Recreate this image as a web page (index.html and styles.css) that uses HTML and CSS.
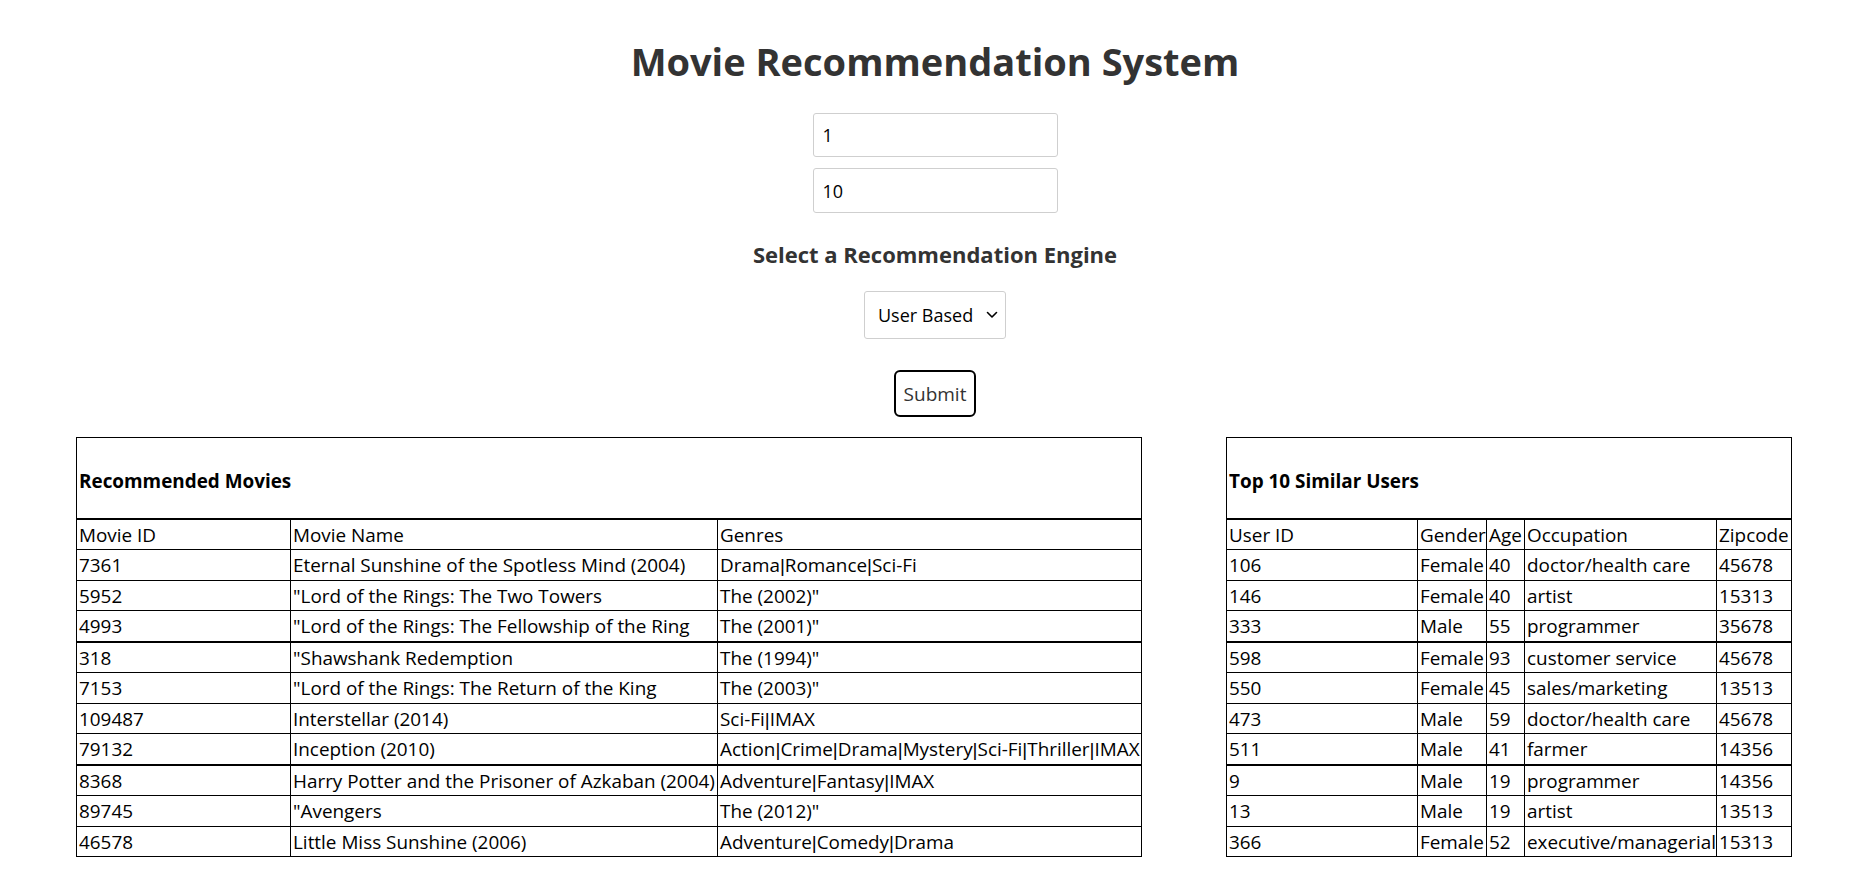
FILE: index.html
```html
<!DOCTYPE html>
<html lang="en">
<head>
<meta charset="utf-8">
<title>Movie Recommendation System</title>
<link rel="stylesheet" href="styles.css">
</head>
<body>
<h1 class="title">Movie Recommendation System</h1>
<form class="form">
  <input class="field field-first" type="text" value="1">
  <input class="field" type="text" value="10">
  <h5 class="engine-label">Select a Recommendation Engine</h5>
  <div class="select-wrap">
    <select class="engine">
      <option>User Based</option>
      <option>Item Based</option>
    </select>
    <svg class="chevron" width="12" height="8" viewBox="0 0 12 8"><path d="M1.5 1.5 L6 6 L10.5 1.5" fill="none" stroke="#000" stroke-width="1.6" stroke-linecap="round" stroke-linejoin="round"/></svg>
  </div>
  <button class="submit" type="button">Submit</button>
</form>
<div class="results">
  <table class="data movies">
    <colgroup><col class="m-id"><col class="m-name"><col class="m-genre"></colgroup>
    <thead><tr><th class="caption" colspan="3">Recommended Movies</th></tr></thead>
    <tbody>
      <tr><td>Movie ID</td><td>Movie Name</td><td>Genres</td></tr>
      <tr><td>7361</td><td>Eternal Sunshine of the Spotless Mind (2004)</td><td>Drama<span class="pipe">|</span>Romance<span class="pipe">|</span>Sci-Fi</td></tr>
      <tr><td>5952</td><td>"Lord of the Rings: The Two Towers</td><td>The (2002)"</td></tr>
      <tr><td>4993</td><td>"Lord of the Rings: The Fellowship of the Ring</td><td>The (2001)"</td></tr>
      <tr class="thick"><td>318</td><td>"Shawshank Redemption</td><td>The (1994)"</td></tr>
      <tr><td>7153</td><td>"Lord of the Rings: The Return of the King</td><td>The (2003)"</td></tr>
      <tr><td>109487</td><td>Interstellar (2014)</td><td>Sci-Fi<span class="pipe">|</span>IMAX</td></tr>
      <tr><td>79132</td><td>Inception (2010)</td><td>Action<span class="pipe">|</span>Crime<span class="pipe">|</span>Drama<span class="pipe">|</span>Mystery<span class="pipe">|</span>Sci-Fi<span class="pipe">|</span>Thriller<span class="pipe">|</span>IMAX</td></tr>
      <tr class="thick"><td>8368</td><td>Harry Potter and the Prisoner of Azkaban (2004)</td><td>Adventure<span class="pipe">|</span>Fantasy<span class="pipe">|</span>IMAX</td></tr>
      <tr><td>89745</td><td>"Avengers</td><td>The (2012)"</td></tr>
      <tr><td>46578</td><td>Little Miss Sunshine (2006)</td><td>Adventure<span class="pipe">|</span>Comedy<span class="pipe">|</span>Drama</td></tr>
    </tbody>
  </table>
  <table class="data users">
    <colgroup><col class="u-id"><col class="u-gender"><col class="u-age"><col class="u-occ"><col class="u-zip"></colgroup>
    <thead><tr><th class="caption" colspan="5">Top 10 Similar Users</th></tr></thead>
    <tbody>
      <tr><td>User ID</td><td>Gender</td><td>Age</td><td>Occupation</td><td>Zipcode</td></tr>
      <tr><td>106</td><td>Female</td><td>40</td><td>doctor/health care</td><td>45678</td></tr>
      <tr><td>146</td><td>Female</td><td>40</td><td>artist</td><td>15313</td></tr>
      <tr><td>333</td><td>Male</td><td>55</td><td>programmer</td><td>35678</td></tr>
      <tr class="thick"><td>598</td><td>Female</td><td>93</td><td>customer service</td><td>45678</td></tr>
      <tr><td>550</td><td>Female</td><td>45</td><td>sales/marketing</td><td>13513</td></tr>
      <tr><td>473</td><td>Male</td><td>59</td><td>doctor/health care</td><td>45678</td></tr>
      <tr><td>511</td><td>Male</td><td>41</td><td>farmer</td><td>14356</td></tr>
      <tr class="thick"><td>9</td><td>Male</td><td>19</td><td>programmer</td><td>14356</td></tr>
      <tr><td>13</td><td>Male</td><td>19</td><td>artist</td><td>13513</td></tr>
      <tr><td>366</td><td>Female</td><td>52</td><td>executive/managerial</td><td>15313</td></tr>
    </tbody>
  </table>
</div>
</body>
</html>
```
FILE: styles.css
```css
* { box-sizing: border-box; }
html, body { margin: 0; padding: 0; background: #fff; }
body {
  font-family: "Open Sans", "Noto Sans", "Liberation Sans", sans-serif;
  color: #000;
}
.title {
  margin: 33px 0 0;
  text-align: center;
  font-size: 38px;
  line-height: 57px;
  font-weight: 700;
  color: #333;
}
.form {
  display: flex;
  flex-direction: column;
  align-items: center;
  margin: 0;
}
.field {
  width: 245px;
  height: 45px;
  margin-top: 11px;
  padding: 0 9px;
  border: 1px solid #cfcfcf;
  border-radius: 3px;
  font-family: inherit;
  font-size: 18px;
  color: #000;
  background: #fff;
  outline: none;
}
.field-first { margin-top: 23px; height: 44px; }
.engine-label {
  margin: 26px 0 0;
  font-size: 22px;
  line-height: 30px;
  font-weight: 700;
  color: #333;
}
.select-wrap {
  position: relative;
  margin-top: 22px;
  width: 142px;
  height: 48px;
}
.engine {
  appearance: none;
  -webkit-appearance: none;
  width: 100%;
  height: 100%;
  padding: 0 0 0 13px;
  border: 1px solid #cfcfcf;
  border-radius: 3px;
  background: #fff;
  font-family: inherit;
  font-size: 18px;
  color: #000;
}
.chevron {
  position: absolute;
  right: 8px;
  top: 20px;
  pointer-events: none;
}
.submit {
  margin-top: 31px;
  width: 82px;
  height: 47px;
  padding: 0;
  border: 2px solid #000;
  border-radius: 6px;
  background: #fff;
  font-family: inherit;
  font-size: 19px;
  color: #333;
}
.results {
  display: flex;
  align-items: flex-start;
  gap: 84px;
  margin-top: 20px;
  padding-left: 76px;
}
.data {
  border-collapse: collapse;
  table-layout: fixed;
  font-size: 18.9px;
  color: #000;
}
.data td, .data th {
  border: 1px solid #000;
  padding: 2px 0 0 2px;
  line-height: 27.5px;
  text-align: left;
  white-space: nowrap;
  overflow: hidden;
  vertical-align: middle;
}
.data th.caption {
  height: 81px;
  padding-top: 8px;
  font-weight: 700;
  border-bottom: 2px solid #000;
}
.data tr.thick td { border-top: 2px solid #000; }
.pipe { font-family: "Liberation Sans", sans-serif; }
.movies { width: 1065px; }
.m-id { width: 214px; }
.m-name { width: 427px; }
.m-genre { width: 424px; }
.users { width: 565px; }
.u-id { width: 191px; }
.u-gender { width: 69px; }
.u-age { width: 38px; }
.u-occ { width: 192px; }
.u-zip { width: 75px; }
```
